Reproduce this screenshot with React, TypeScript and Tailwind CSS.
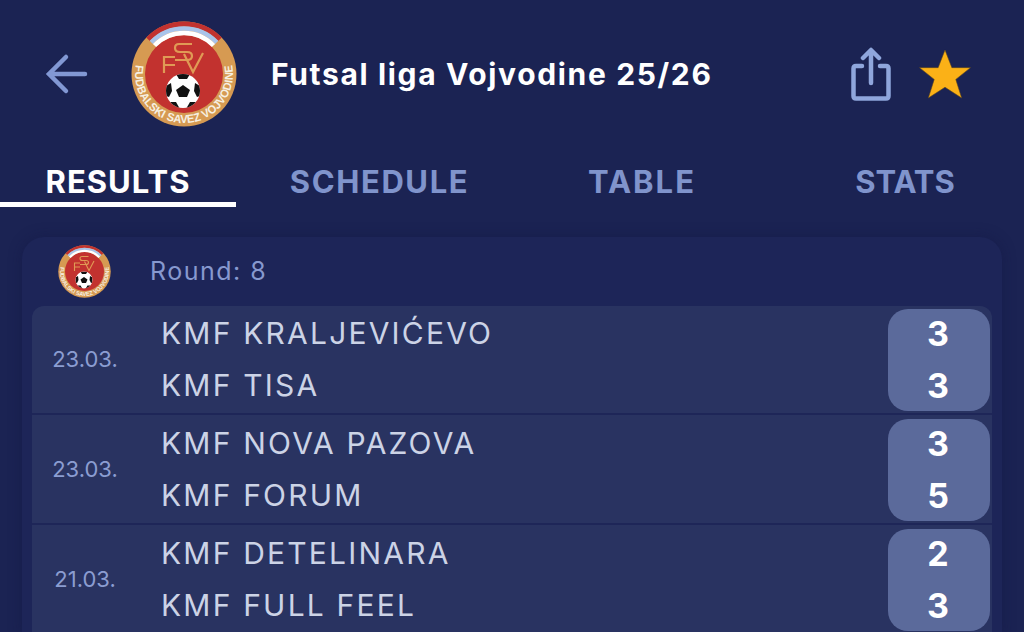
import React from "react";

const font = { fontFamily: '"Inter", "Noto Sans", sans-serif' };

const Logo = ({ id }: { id: string }) => (
  <svg viewBox="0 0 106 106" className="h-full w-full">
    <defs>
      <path id={id} d="M 5.7 40.3 A 49 49 0 1 0 100.3 40.3" />
      <clipPath id={`${id}-ball`}>
        <circle cx="52" cy="70" r="17" />
      </clipPath>
    </defs>
    <circle cx="53" cy="53" r="52.5" fill="#d69a52" />
    <circle cx="53" cy="53" r="39" fill="#c2322f" />
    <g fill="none">
      <path d="M17 18.3 A50 50 0 0 1 89 18.3" stroke="#c2322f" strokeWidth="5" />
      <path d="M20.3 21.4 A45.5 45.5 0 0 1 85.7 21.4" stroke="#a9c4ea" strokeWidth="4.5" />
      <path d="M23.5 24.5 A41 41 0 0 1 82.5 24.5" stroke="#ffffff" strokeWidth="4.5" />
    </g>
    <g fill="none" stroke="#e09a55" strokeWidth="2.2">
      <path d="M61 23 H48 Q44 23 44 27 Q44 31 49 31 H56 Q61 31 61 35 Q61 39 56 39 H44" />
      <path d="M44 36 H33 V52 M33 44 H44" />
      <path d="M53 33 L62 51 L72 32" />
    </g>
    <circle cx="52" cy="70" r="17" fill="#ffffff" />
    <g clipPath={`url(#${id}-ball)`} fill="#111111">
      <path d="M52 64 L59 69 L56 76 L48 76 L45 69 Z" />
      <path d="M45 53 L59 53 L56 58 L48 58 Z" />
      <path d="M35 65 L40 62 L41 70 L38 76 L35 75 Z" />
      <path d="M69 65 L64 62 L63 70 L66 76 L69 75 Z" />
      <path d="M39 81 L45 81 L49 88 L42 87 Z" />
      <path d="M65 81 L59 81 L55 88 L62 87 Z" />
    </g>
    <text fontSize="11.5" fontWeight="700" fill="#f7f0e2" style={{ fontFamily: '"Liberation Sans", sans-serif' }}>
      <textPath href={`#${id}`} startOffset="50%" textAnchor="middle" textLength="172" lengthAdjust="spacingAndGlyphs">
        FUDBALSKI SAVEZ VOJVODINE
      </textPath>
    </text>
  </svg>
);

const matches = [
  { date: "23.03.", home: "KMF KRALJEVIĆEVO", away: "KMF TISA", a: 3, b: 3 },
  { date: "23.03.", home: "KMF NOVA PAZOVA", away: "KMF FORUM", a: 3, b: 5 },
  { date: "21.03.", home: "KMF DETELINARA", away: "KMF FULL FEEL", a: 2, b: 3 },
];

const tabs = [
  { name: "RESULTS", cls: "border-b-[5px] border-white text-white tracking-[1px]" },
  { name: "SCHEDULE", cls: "text-[#8094cc] tracking-[1.6px]" },
  { name: "TABLE", cls: "text-[#8094cc] tracking-[2px]" },
  { name: "STATS", cls: "text-[#8094cc] pl-[25px]" },
];

export default function App() {
  return (
    <div style={font} className="flex h-[632px] w-[1024px] flex-col overflow-hidden bg-[#1b2353]">
      {/* header */}
      <div className="flex h-[150px] shrink-0 items-center pb-[2px]">
        <div className="ml-[45px] w-[43px] text-[#8298d4]">
          <svg viewBox="0 0 43 42" className="h-[42px] w-[43px]" fill="none" stroke="currentColor" strokeWidth="4.5" strokeLinecap="round">
            <path d="M40 21 H4 M21 4 L4 21 L21 38" />
          </svg>
        </div>
        <div className="ml-[43px] h-[106px] w-[106px]">
          <Logo id="big" />
        </div>
        <h1 className="ml-[34px] flex-1 text-[30px] font-bold tracking-[1.65px] text-white">Futsal liga Vojvodine 25/26</h1>
        <svg viewBox="0 0 40 54" className="h-[54px] w-[40px] text-[#8fa6dc]" fill="none" stroke="currentColor" strokeWidth="4.5" strokeLinejoin="round" strokeLinecap="round">
          <path d="M11 19 H5 Q2.5 19 2.5 21.5 V49 Q2.5 51.5 5 51.5 H35 Q37.5 51.5 37.5 49 V21.5 Q37.5 19 35 19 H29" />
          <path d="M20 36 V4 M12 11 L20 3 L28 11" />
        </svg>
        <svg viewBox="0 0 54 52" className="ml-[27px] mr-[52px] h-[51px] w-[54px]">
          <path d="M27 1 L34 19 L53 19 L38 31 L44 50 L27 39 L10 50 L16 31 L1 19 L20 19 Z" fill="#fbb117" stroke="#5a4520" strokeWidth="0.6" />
        </svg>
      </div>

      {/* tabs */}
      <div className="grid h-[57px] shrink-0 grid-cols-[236px_287px_238px_263px]">
        {tabs.map((t) => (
          <div key={t.name} className={`flex items-start justify-center pt-[12px] text-[31px] leading-[40px] font-bold ${t.cls}`}>
            {t.name}
          </div>
        ))}
      </div>

      {/* round card */}
      <div className="mx-[22px] mt-[30px] flex-1 rounded-t-[22px] bg-[#1d2558] px-[10px] shadow-[0_0_14px_rgba(17,23,66,0.45)]">
        <div className="flex h-[69px] items-center pl-[26px]">
          <div className="h-[53px] w-[53px]">
            <Logo id="small" />
          </div>
          <span className="ml-[39px] text-[25px] tracking-[1.5px] text-[#8799cf]">Round: 8</span>
        </div>
        <div className="flex flex-col overflow-hidden rounded-t-[12px]">
          {matches.map((m) => (
            <div key={m.home} className="bg-[#293361] pb-[1px]">
              <div className="flex h-[109px] items-center border-b-2 border-[#1e2658] pr-[2px]">
                <div className="w-[106px] text-center text-[22px] text-[#8b9dd1]">{m.date}</div>
                <div className="ml-[23px] flex flex-1 flex-col gap-[15px] text-[30px] leading-[37px] tracking-[2.2px] text-[#ccd3e6]">
                  <span>{m.home}</span>
                  <span>{m.away}</span>
                </div>
                <div className="flex h-[102px] w-[102px] flex-col items-center justify-center gap-[15px] rounded-[20px] bg-[#5b6a9b] pr-[2px] text-[34px] leading-[37px] font-bold text-white">
                  <span>{m.a}</span>
                  <span>{m.b}</span>
                </div>
              </div>
            </div>
          ))}
        </div>
      </div>
    </div>
  );
}
